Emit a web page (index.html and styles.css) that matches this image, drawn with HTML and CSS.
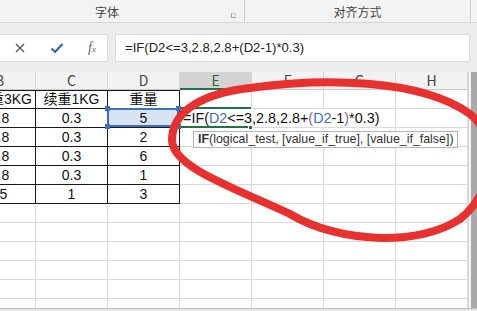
FILE: index.html
```html
<!DOCTYPE html>
<html lang="zh">
<head>
<meta charset="utf-8">
<title>Excel IF</title>
<link rel="stylesheet" href="styles.css">
</head>
<body>
<div class="app">
  <div class="ribbon">
    <div class="group g1"><span class="glabel">字体</span><span class="launcher"></span></div>
    <div class="group g2"><span class="glabel">对齐方式</span></div>
  </div>
  <div class="fbar">
    <div class="fbtns">
      <svg class="ico" width="12" height="12" viewBox="0 0 12 12"><path d="M2 2L10 10M10 2L2 10" stroke="#555" stroke-width="1.3" fill="none"/></svg>
      <svg class="ico" width="14" height="12" viewBox="0 0 14 12"><path d="M1.5 6.5L5 10L12.5 2" stroke="#2a6fb0" stroke-width="2.2" fill="none"/></svg>
      <span class="fx">f<span class="fxs">x</span></span>
    </div>
    <div class="finput">=IF(D2&lt;=3,2.8,2.8+(D2-1)*0.3)</div>
  </div>
  <div class="sheet">
    <div class="grid">
      <div class="h">B</div><div class="h">C</div><div class="h">D</div><div class="h hact">E</div><div class="h">F</div><div class="h">G</div><div class="h">H</div>

      <div class="c t t1 b1">首重3KG</div><div class="c t t1">续重1KG</div><div class="c t t1">重量</div><div class="c"></div><div class="c"></div><div class="c"></div><div class="c"></div>

      <div class="c t">2.8</div><div class="c t">0.3</div><div class="c t ref">5<i class="hd hd1"></i><i class="hd hd2"></i><i class="hd hd3"></i><i class="hd hd4"></i></div><div class="c act nor"><span class="ftext">=IF(<b class="r1">D2</b>&lt;=3,2.8,2.8+<b class="p">(</b><b class="r1">D2</b>-1<b class="p">)</b>*0.3)</span><i class="fh"></i></div><div class="c nor"></div><div class="c"></div><div class="c"></div>

      <div class="c t">2.8</div><div class="c t">0.3</div><div class="c t">2</div><div class="c"></div><div class="c"></div><div class="c"></div><div class="c"></div>
      <div class="c t">2.8</div><div class="c t">0.3</div><div class="c t">6</div><div class="c"></div><div class="c"></div><div class="c"></div><div class="c"></div>
      <div class="c t">2.8</div><div class="c t">0.3</div><div class="c t">1</div><div class="c"></div><div class="c"></div><div class="c"></div><div class="c"></div>
      <div class="c t">15</div><div class="c t">1</div><div class="c t">3</div><div class="c"></div><div class="c"></div><div class="c"></div><div class="c"></div>

      <div class="c"></div><div class="c"></div><div class="c"></div><div class="c"></div><div class="c"></div><div class="c"></div><div class="c"></div>
      <div class="c"></div><div class="c"></div><div class="c"></div><div class="c"></div><div class="c"></div><div class="c"></div><div class="c"></div>
      <div class="c"></div><div class="c"></div><div class="c"></div><div class="c"></div><div class="c"></div><div class="c"></div><div class="c"></div>
      <div class="c"></div><div class="c"></div><div class="c"></div><div class="c"></div><div class="c"></div><div class="c"></div><div class="c"></div>
      <div class="c"></div><div class="c"></div><div class="c"></div><div class="c"></div><div class="c"></div><div class="c"></div><div class="c"></div>
      <div class="c"></div><div class="c"></div><div class="c"></div><div class="c"></div><div class="c"></div><div class="c"></div><div class="c"></div>
    </div>
    <div class="vscroll"></div>
  </div>
  <div class="bottombar"></div>

  <div class="tooltip"><b>IF</b>(logical_test, [value_if_true], [value_if_false])</div>

  <svg class="mark" width="477" height="311" viewBox="0 0 477 311">
    <path d="M172 140 C172 110 205 93 250 88 C320 78 420 78 470 114 C500 138 495 192 460 219 C420 246 340 244 290 214 C240 190 172 168 172 140 Z" fill="none" stroke="#e8302e" stroke-width="8"/>
  </svg>
</div>
</body>
</html>
```

FILE: styles.css
```css
* { box-sizing: border-box; }
html, body { margin: 0; padding: 0; }
body {
  width: 477px;
  height: 311px;
  overflow: hidden;
  background: #ececec;
  font-family: "Liberation Sans", "Noto Sans CJK SC", sans-serif;
}
.app {
  position: relative;
  width: 477px;
  height: 311px;
  overflow: hidden;
}
.ribbon {
  height: 23px;
  display: flex;
  background: #f3f3f3;
  border-bottom: 1px solid #d5d5d5;
}
.group {
  position: relative;
  display: flex;
  align-items: center;
  justify-content: center;
  height: 22px;
  font-family: "Noto Sans CJK SC", sans-serif;
  font-size: 12px;
  color: #444;
}
.g1 {
  width: 245px;
  padding-right: 30px;
  border-right: 1px solid #cfcfcf;
}
.g2 {
  width: 226px;
  border-right: 1px solid #cfcfcf;
}
.launcher {
  position: absolute;
  right: 8px;
  top: 13px;
  width: 5px;
  height: 5px;
  border-left: 1px solid #a0a0a0;
  border-bottom: 1px solid #a0a0a0;
  border-top: 1px solid #c8c8c8;
  border-right: 1px solid #c8c8c8;
}
.fbar {
  height: 49px;
  padding: 11px 7px 10px 0;
  display: flex;
  gap: 7px;
  background: #ececec;
}
.fbtns {
  width: 108px;
  height: 28px;
  background: #fff;
  border: 1px solid #dcdcdc;
  border-left: none;
  display: flex;
  align-items: center;
  padding-left: 14px;
}
.ico { display: block; }
.fbtns .ico:first-child { margin-right: 24px; }
.fbtns .ico:nth-child(2) { margin-right: 24px; }
.fx {
  font-family: "Liberation Serif", serif;
  font-style: italic;
  font-size: 14px;
  color: #666;
}
.fxs { font-size: 9px; }
.finput {
  flex: 1;
  height: 28px;
  background: #fff;
  border: 1px solid #dcdcdc;
  padding-left: 9px;
  font-size: 13.1px;
  line-height: 26px;
  color: #222;
  white-space: nowrap;
}
.sheet {
  height: 236px;
  display: flex;
  overflow: hidden;
  background: #fff;
}
.grid {
  flex: none;
  width: 504px;
  margin-left: -36px;
  display: grid;
  grid-template-columns: repeat(7, 72px);
  grid-template-rows: 18px;
  grid-auto-rows: 19px;
}
.h {
  background: #f2f2f2;
  border-right: 1px solid #d4d4d4;
  border-bottom: 1px solid #c8c8c8;
  font-family: "Noto Sans CJK SC", sans-serif;
  font-size: 14px;
  line-height: 17px;
  color: #444;
  text-align: center;
}
.hact {
  background: #d3d3d3;
  border-bottom: 2px solid #217346;
  color: #2f5f3f;
}
.c {
  border-right: 1px solid #dadada;
  border-bottom: 1px solid #dadada;
  font-family: "Liberation Sans", "Noto Sans CJK SC", sans-serif;
  font-size: 14px;
  line-height: 18px;
  color: #111;
  text-align: center;
  white-space: nowrap;
}
.b1 { padding-left: 9px; }
.t {
  border-right-color: #1a1a1a;
  border-bottom-color: #1a1a1a;
}
.t1 { box-shadow: inset 0 1px 0 #1a1a1a; }
.ref {
  position: relative;
  background: #d8e3f3;
}
.ref::after {
  content: "";
  position: absolute;
  top: -1px;
  left: -1px;
  right: 0;
  bottom: 0;
  border: 2px solid #3e6fc0;
}
.hd {
  position: absolute;
  width: 5px;
  height: 5px;
  background: #3e6fc0;
  z-index: 2;
}
.hd1 { left: -3px; top: -3px; }
.hd2 { right: -2px; top: -3px; }
.hd3 { left: -3px; bottom: -2px; }
.hd4 { right: -2px; bottom: -2px; }
.nor { border-right-color: transparent; }
.act {
  position: relative;
  text-align: left;
  overflow: visible;
}
.act::before {
  content: "";
  position: absolute;
  left: -2px;
  right: 0;
  top: -2px;
  bottom: -1px;
  border-top: 2px solid #217346;
  border-bottom: 2px solid #217346;
}
.fh {
  position: absolute;
  right: -2px;
  bottom: -3px;
  width: 5px;
  height: 5px;
  background: #217346;
  border: 1px solid #fff;
}
.ftext {
  position: relative;
  z-index: 3;
  padding-left: 3px;
  font-family: "Liberation Sans", sans-serif;
  font-size: 14.37px;
  line-height: 18px;
  color: #111;
}
.ftext b { font-weight: normal; }
.r1 { color: #3d6fc4; }
.p { color: #8e5c9a; }
.vscroll {
  flex: none;
  width: 9px;
  border-left: 1px solid #d6d6d6;
  background: linear-gradient(to right, #f3f3f3 0, #f3f3f3 2px, #a9a9a9 2px, #a9a9a9 100%);
}
.bottombar {
  height: 3px;
  border-top: 1px solid #bdbdbd;
  background: #e6e6e6;
}
.tooltip {
  position: absolute;
  left: 193px;
  top: 131px;
  width: 265px;
  height: 17px;
  background: #fff;
  border: 1px solid #b5b5b5;
  padding-left: 4px;
  font-size: 12.4px;
  line-height: 15px;
  color: #333;
  white-space: nowrap;
  z-index: 5;
}
.tooltip b { font-weight: bold; }
.mark {
  position: absolute;
  left: 0;
  top: 0;
  z-index: 10;
  pointer-events: none;
}
```
